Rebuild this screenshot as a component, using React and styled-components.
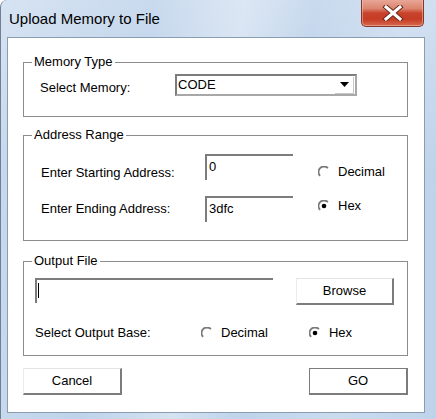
import React from 'react';
import styled, { createGlobalStyle } from 'styled-components';

const GlobalStyle = createGlobalStyle`
  html, body {
    margin: 0;
    padding: 0;
    background: #fff;
  }
  body {
    font-family: "Liberation Sans", Arial, sans-serif;
    font-size: 13px;
    color: #000;
  }
  * {
    box-sizing: border-box;
  }
`;

function Radio({ checked }) {
  return (
    <RadioIcon width="12" height="12" viewBox="0 0 12 12">
      <path d="M2.1 9.9 A5.5 5.5 0 0 1 9.9 2.1" fill="none" stroke="#7a7a7a" strokeWidth="1.8" />
      {checked && <circle cx="6" cy="6" r="2.3" fill="#000" />}
    </RadioIcon>
  );
}

function RadioOption({ label, checked }) {
  return (
    <RadioItem>
      <Radio checked={checked} />
      <span>{label}</span>
    </RadioItem>
  );
}

function App() {
  return (
    <>
      <GlobalStyle />
      <Window>
        <TitleBar>
          <Title>Upload Memory to File</Title>
          <CloseButton>
            <svg width="24" height="16" viewBox="0 0 24 16">
              <path d="M5 2 L19 14 M19 2 L5 14" stroke="#6b2a20" strokeWidth="5" strokeLinecap="square" />
              <path d="M5 2 L19 14 M19 2 L5 14" stroke="#fff" strokeWidth="3" strokeLinecap="square" />
            </svg>
          </CloseButton>
        </TitleBar>
        <Client>
          <Group>
            <Legend>Memory Type</Legend>
            <MemoryRow>
              <MemoryLabel>Select Memory:</MemoryLabel>
              <Combo>
                <ComboText>CODE</ComboText>
                <ComboArrow>
                  <svg width="9" height="5" viewBox="0 0 9 5">
                    <path d="M0 0 H9 L4.5 5 Z" fill="#000" />
                  </svg>
                </ComboArrow>
              </Combo>
            </MemoryRow>
          </Group>

          <Group $gap={10} $pt={11} $pb={18}>
            <Legend>Address Range</Legend>
            <AddressRow>
              <LabelColumn>
                <span>Enter Starting Address:</span>
                <span>Enter Ending Address:</span>
              </LabelColumn>
              <InputColumn>
                <TextField>0</TextField>
                <TextField>3dfc</TextField>
              </InputColumn>
              <RadioColumn>
                <RadioOption label="Decimal" />
                <RadioOption label="Hex" checked />
              </RadioColumn>
            </AddressRow>
          </Group>

          <Group $gap={12} $pt={9} $pb={14}>
            <Legend>Output File</Legend>
            <FileRow>
              <FileField>
                <Caret />
              </FileField>
              <Button $width={98}>Browse</Button>
            </FileRow>
            <BaseRow>
              <BaseLabel>Select Output Base:</BaseLabel>
              <BaseOptions>
                <RadioOption label="Decimal" />
                <RadioOption label="Hex" checked />
              </BaseOptions>
            </BaseRow>
          </Group>

          <ButtonRow>
            <Button $width={99}>Cancel</Button>
            <Button $width={99} $default>GO</Button>
          </ButtonRow>
        </Client>
      </Window>
    </>
  );
}

export default App;

const Window = styled.div`
  width: 436px;
  height: 419px;
  display: flex;
  flex-direction: column;
  border-left: 1px solid #6f8096;
  border-radius: 7px 0 0 0;
  background: linear-gradient(
      100deg,
      rgba(255, 255, 255, 0.25) 0%,
      rgba(255, 255, 255, 0) 30%,
      rgba(255, 255, 255, 0.35) 48%,
      rgba(255, 255, 255, 0) 62%,
      rgba(255, 255, 255, 0.2) 80%,
      rgba(255, 255, 255, 0) 100%
    ),
    linear-gradient(#c9daee, #b9cfe8 40%, #bed3ea);
`;

const TitleBar = styled.div`
  height: 37px;
  display: flex;
  align-items: center;
  justify-content: space-between;
  padding-left: 8px;
  padding-right: 12px;
`;

const Title = styled.span`
  font-size: 15px;
  color: #000;
  font-family: "Liberation Sans", Arial, sans-serif;
`;

const CloseButton = styled.div`
  align-self: flex-start;
  width: 63px;
  height: 28px;
  margin-top: -1px;
  display: flex;
  align-items: center;
  justify-content: center;
  border: 1px solid #82392d;
  border-top: none;
  border-radius: 0 0 5px 5px;
  background: linear-gradient(#e9aa9b 0%, #dc8570 35%, #c8432b 52%, #c53c25 75%, #d66a4f 100%);
  box-shadow: inset 0 0 0 1px rgba(255, 210, 200, 0.45);
`;

const Client = styled.div`
  margin: 0 11px 0 6px;
  height: 376px;
  background: #fff;
  border: 1px solid #8a9cb2;
  padding: 16px 16px 0 15px;
  display: flex;
  flex-direction: column;
`;

const Group = styled.fieldset`
  margin: ${(p) => p.$gap || 0}px 0 0 0;
  padding: ${(p) => p.$pt ?? 4}px 0 ${(p) => p.$pb ?? 20}px 0;
  border: 1px solid #8c8c8c;
  min-width: 0;
`;

const Legend = styled.legend`
  margin-left: 8px;
  padding: 0 2px;
  line-height: 16px;
  font-size: 13px;
`;

const MemoryRow = styled.div`
  display: flex;
  align-items: flex-end;
  padding-left: 16px;
`;

const MemoryLabel = styled.span`
  width: 135px;
  line-height: 16px;
`;

const Combo = styled.div`
  width: 182px;
  height: 22px;
  display: flex;
  align-items: center;
  justify-content: space-between;
  border-top: 2px solid #7c7c7c;
  border-left: 2px solid #7c7c7c;
  border-right: 2px solid #a8a8a8;
  border-bottom: 2px solid #a8a8a8;
  padding-left: 1px;
`;

const ComboText = styled.span`
  line-height: 16px;
`;

const ComboArrow = styled.div`
  width: 19px;
  height: 17px;
  margin-right: 1px;
  display: flex;
  align-items: center;
  justify-content: center;
  border-right: 1px solid #c8c8c8;
  border-bottom: 1px solid #c8c8c8;
`;

const AddressRow = styled.div`
  display: flex;
  align-items: flex-start;
`;

const LabelColumn = styled.div`
  width: 181px;
  display: flex;
  flex-direction: column;
  gap: 20px;
  padding: 11px 0 0 17px;
  line-height: 16px;
`;

const InputColumn = styled.div`
  width: 88px;
  display: flex;
  flex-direction: column;
  gap: 16px;
`;

const TextField = styled.div`
  height: 26px;
  border-top: 2px solid #7c7c7c;
  border-left: 2px solid #7c7c7c;
  padding: 3px 0 0 2px;
  line-height: 16px;
`;

const RadioColumn = styled.div`
  display: flex;
  flex-direction: column;
  gap: 18px;
  margin-left: 25px;
  padding-top: 10px;
`;

const RadioItem = styled.label`
  display: flex;
  align-items: center;
  gap: 8px;
  line-height: 16px;
`;

const RadioIcon = styled.svg`
  display: block;
  flex: none;
`;

const FileRow = styled.div`
  display: flex;
  align-items: flex-start;
  padding-left: 11px;
  gap: 23px;
`;

const FileField = styled.div`
  width: 238px;
  height: 25px;
  border-top: 2px solid #7c7c7c;
  border-left: 2px solid #7c7c7c;
  padding: 3px 0 0 1px;
`;

const Caret = styled.div`
  width: 1px;
  height: 15px;
  background: #000;
`;

const BaseRow = styled.div`
  display: flex;
  align-items: center;
  margin-top: 20px;
  padding-left: 11px;
  line-height: 16px;
`;

const BaseLabel = styled.span`
  width: 166px;
`;

const BaseOptions = styled.div`
  display: flex;
  gap: 41px;
`;

const ButtonRow = styled.div`
  display: flex;
  justify-content: space-between;
  margin-top: 12px;
`;

const Button = styled.div`
  width: ${(p) => p.$width}px;
  height: 27px;
  display: flex;
  align-items: center;
  justify-content: center;
  line-height: 16px;
  border-top: 1px solid ${(p) => (p.$default ? '#7c7c7c' : '#e4e4e4')};
  border-left: 1px solid ${(p) => (p.$default ? '#7c7c7c' : '#ececec')};
  border-right: 2px solid #7c7c7c;
  border-bottom: 2px solid #7c7c7c;
  background: #fff;
`;
